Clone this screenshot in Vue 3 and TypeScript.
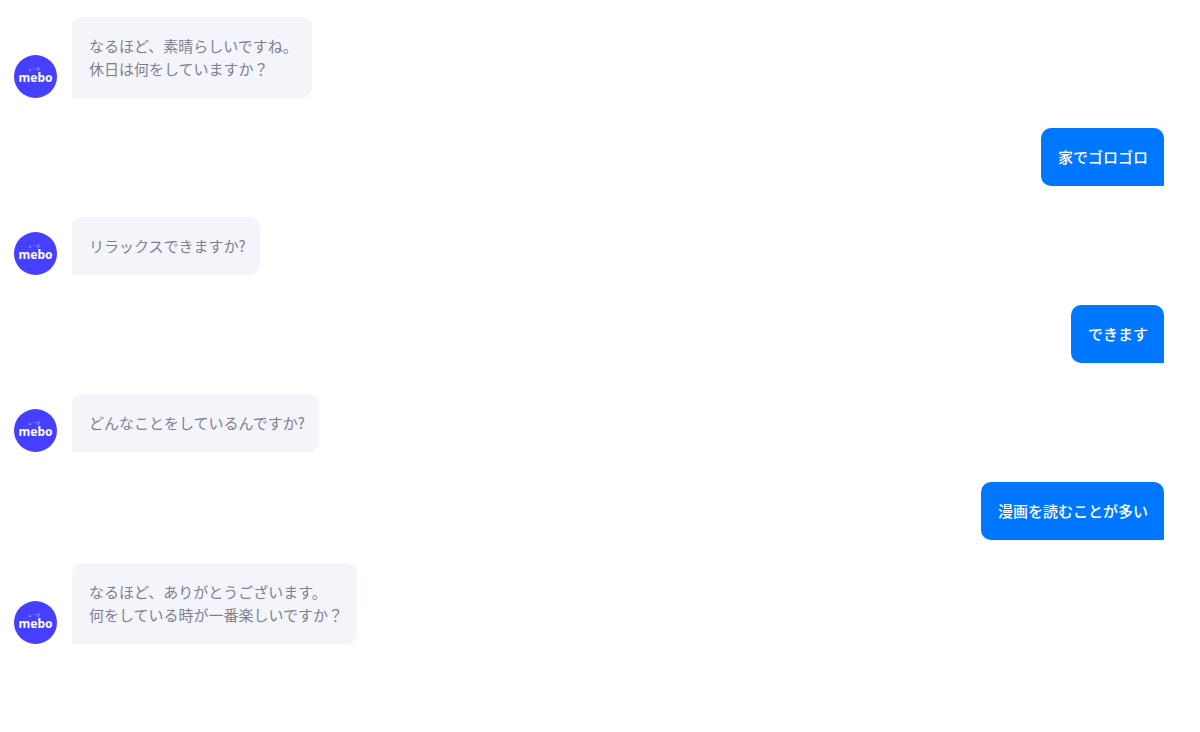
<script setup lang="ts">
interface Message {
  id: number
  from: 'bot' | 'user'
  lines: string[]
}

const messages: Message[] = [
  { id: 1, from: 'bot', lines: ['なるほど、素晴らしいですね。', '休日は何をしていますか？'] },
  { id: 2, from: 'user', lines: ['家でゴロゴロ'] },
  { id: 3, from: 'bot', lines: ['リラックスできますか?'] },
  { id: 4, from: 'user', lines: ['できます'] },
  { id: 5, from: 'bot', lines: ['どんなことをしているんですか?'] },
  { id: 6, from: 'user', lines: ['漫画を読むことが多い'] },
  { id: 7, from: 'bot', lines: ['なるほど、ありがとうございます。', '何をしている時が一番楽しいですか？'] },
]
</script>

<template>
  <main class="chat" lang="ja">
    <div v-for="message in messages" :key="message.id" class="row" :class="message.from">
      <svg v-if="message.from === 'bot'" class="avatar" viewBox="0 0 43 43" role="img" aria-label="mebo">
        <circle cx="21.5" cy="21.5" r="21.5" fill="#4540ff" />
        <text text-anchor="middle">
          <tspan class="ruby" x="20" y="16">ミーボ</tspan>
          <tspan class="brand" x="21.5" y="27">mebo</tspan>
        </text>
      </svg>
      <div class="bubble">
        <p v-for="line in message.lines" :key="line">{{ line }}</p>
      </div>
    </div>
  </main>
</template>

<style>
body {
  margin: 0;
  background: #fff;
}
</style>

<style scoped>
.chat {
  padding: 17px 36px 31px 14px;
  font-family: "Noto Sans CJK JP", sans-serif;
  font-size: 15px;
  line-height: 23px;
}

.row {
  display: flex;
  align-items: flex-end;
  gap: 15px;
  margin-bottom: 30px;
}

.row.user {
  justify-content: flex-end;
  margin-bottom: 31px;
}

.row:last-child {
  margin-top: -8px;
}

.avatar {
  flex: none;
  width: 43px;
  height: 43px;
}

.brand {
  fill: #fff;
  font-family: "Noto Sans", "Open Sans", sans-serif;
  font-size: 12px;
  font-weight: 700;
}

.ruby {
  fill: #c9c7ff;
  font-size: 4px;
}

.bubble {
  padding: 17px 14px 18px 17px;
  border-radius: 10px 10px 10px 1px;
  background: #f4f5fa;
  color: #7f7f8e;
}

.user .bubble {
  padding-right: 16px;
  border-radius: 10px 10px 1px 10px;
  background: #0077ff;
  color: #fff;
  font-weight: 500;
}

.bubble p {
  margin: 0;
}
</style>
